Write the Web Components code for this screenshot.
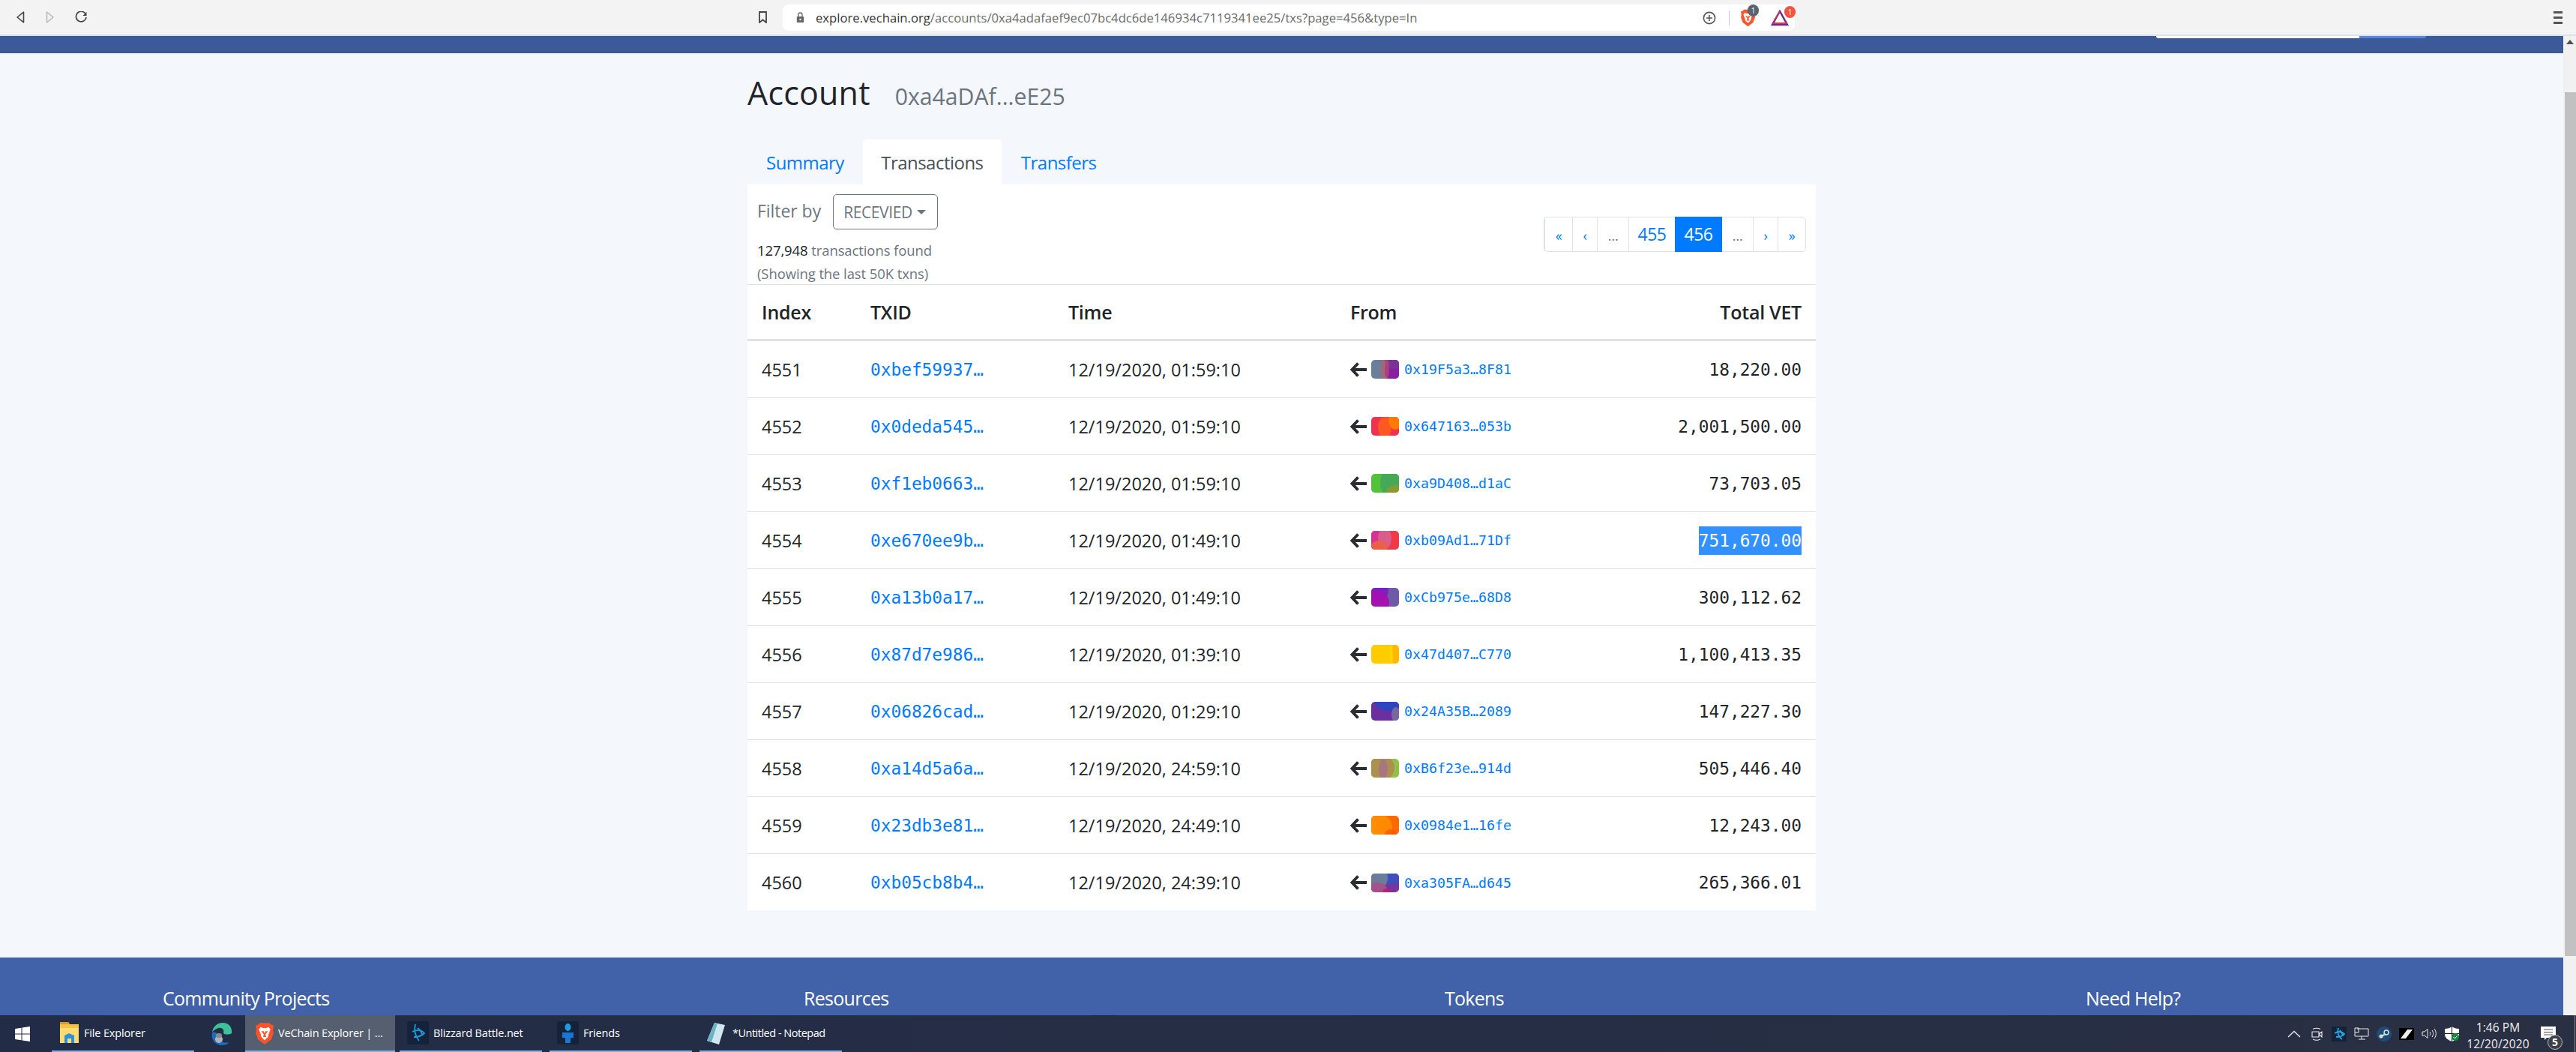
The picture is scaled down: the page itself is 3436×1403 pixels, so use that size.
<!DOCTYPE html>
<html lang="en"><head><meta charset="utf-8"><title>VeChain Explorer</title>
<style>
html,body{margin:0;padding:0;height:100%;overflow:hidden}
body{width:3436px;height:1403px;display:flex;flex-direction:column;font-family:"Open Sans","Noto Sans",sans-serif;background:#f4f7fc}
</style></head><body>
<browser-toolbar></browser-toolbar>
<page-view>
  <site-header></site-header>
  <account-title></account-title>
  <tab-bar></tab-bar>
  <tx-card>
    <tx-row index="4551" txid="0xbef59937…" time="12/19/2020, 01:59:10" addr="0x19F5a3…8F81" total="18,220.00" pic='#6a7f9b|#8a1aa0,31,14,13,18,.95|#7a3598,30,0,12,12,.9|#c85a60,18,12,6,17,.55'></tx-row>
    <tx-row index="4552" txid="0x0deda545…" time="12/19/2020, 01:59:10" addr="0x647163…053b" total="2,001,500.00" pic='#f2304f|#ff5a1f,18,14,9,14,.95|#ff7a00,32,3,9,14,1'></tx-row>
    <tx-row index="4553" txid="0xf1eb0663…" time="12/19/2020, 01:59:10" addr="0xa9D408…d1aC" total="73,703.05" pic='#52c23b|#45a85a,27,12,15,20,.95|#8c9a30,32,25,12,10,.95'></tx-row>
    <tx-row index="4554" txid="0xe670ee9b…" time="12/19/2020, 01:49:10" addr="0xb09Ad1…71Df" total="751,670.00" selected pic='#ee3a48|#d8309a,4,8,18,20,.95|#d9608a,18,10,9,14,.95|#ee6040,10,23,11,10,.95'></tx-row>
    <tx-row index="4555" txid="0xa13b0a17…" time="12/19/2020, 01:49:10" addr="0xCb975e…68D8" total="300,112.62" pic='#6f5ba5|#7b1fc0,6,4,17,14,.95|#a70fb0,8,20,16,16,.95'></tx-row>
    <tx-row index="4556" txid="0x87d7e986…" time="12/19/2020, 01:39:10" addr="0x47d407…C770" total="1,100,413.35" pic='#ffcc00|#ffb000,33,12,6,14,.7|#ffe000,27,12,2,11,.7'></tx-row>
    <tx-row index="4557" txid="0x06826cad…" time="12/19/2020, 01:29:10" addr="0x24A35B…2089" total="147,227.30" pic='#6b2fa0|#2f45c0,22,0,17,12,1|#7a6aa0,33,17,6,10,.95'></tx-row>
    <tx-row index="4558" txid="0xa14d5a6a…" time="12/19/2020, 24:59:10" addr="0xB6f23e…914d" total="505,446.40" pic='#8fc14a|#ad8f50,14,12,17,17,1|#a4708a,16,14,6,13,.8'></tx-row>
    <tx-row index="4559" txid="0x23db3e81…" time="12/19/2020, 24:49:10" addr="0x0984e1…16fe" total="12,243.00" pic='#ff6a00|#ffb000,-2,20,10,20,1|#ff8c00,12,16,16,18,.95|#ff5500,26,26,8,8,.8'></tx-row>
    <tx-row index="4560" txid="0xb05cb8b4…" time="12/19/2020, 24:39:10" addr="0xa305FA…d645" total="265,366.01" last pic='#7a349e|#3f4fbc,26,0,20,14,1|#6b7f9a,6,6,16,16,.95|#a8508a,8,24,14,12,.95|#c01870,20,26,5,6,.9'></tx-row>
  </tx-card>
  <site-footer></site-footer>
</page-view>
<task-bar></task-bar>
<script>
const SANS='"Open Sans","Noto Sans",sans-serif';
const MONO='"DejaVu Sans Mono","Liberation Mono",monospace';
function el(name,css,html){
  customElements.define(name,class extends HTMLElement{
    connectedCallback(){ if(this.shadowRoot) return;
      this.attachShadow({mode:'open'}).innerHTML='<style>'+css+'</style>'+(typeof html==='function'?html(this):html);
    }
  });
}
const LION=(w,h)=>`<svg width="${w}" height="${h}" viewBox="0 0 22 27"><path d="M5 1h12l2 2 3 1-1 6 1 3-3 8-8 6-8-6-3-8 1-3-1-6 3-1z" fill="#fb542b"/><path d="M6 6l3 1h4l3-1 2 3-2 5-1 4-3 3-1 1-1-1-3-3-1-4-2-5z" fill="#fff"/><path d="M7 11h3l1 3 1-3h3l-3 4 1 3h-4l1-3z" fill="#fb542b"/></svg>`;

el('browser-toolbar',`
:host{display:flex;flex:none;height:46px;background:#f3f3f3;border-bottom:2px solid #dee1e6;align-items:center;position:relative;box-sizing:content-box;font-family:${SANS}}
svg{display:block;flex:none}
.nav{display:flex;align-items:center;padding-left:21px;width:1011px;box-sizing:border-box}
.nav svg+svg{margin-left:26px}
.bm{margin-right:20px}
.url{margin-top:1px;width:1350px;height:35px;background:#fff;border-radius:8px;display:flex;align-items:center;padding-left:18px;box-sizing:border-box;position:relative;flex:none}
.url .t{font-size:16.6px;color:#6a6a6a;white-space:nowrap;margin-left:15px;letter-spacing:.03px}
.url b{font-weight:400;color:#333}
.r{position:absolute;left:0;top:0;height:35px;display:flex;align-items:center}
.plus{margin-left:1227px}
.sep{width:1px;height:20px;background:#c8c8c8;margin-left:17px}
.lion{margin-left:15px;position:relative}
.badge{position:absolute;width:15px;height:21px;border-radius:8px;font-size:10px;line-height:21px;text-align:center;color:#fff;top:3px}
.tri{margin-left:21px}
.menu{position:absolute;left:3406px;top:15px;display:flex;flex-direction:column;gap:4px}
.menu i{display:block;width:12px;height:3px;background:#555}
`,`<div class="nav">
<svg width="13" height="16" viewBox="0 0 13 16"><path d="M10.5 1.2v13.6L2 8z" fill="none" stroke="#444" stroke-width="1.6" stroke-linejoin="round"/></svg>
<svg width="13" height="16" viewBox="0 0 13 16"><path d="M2.5 1.2v13.6L11 8z" fill="none" stroke="#bbb" stroke-width="1.6" stroke-linejoin="round"/></svg>
<svg width="17" height="16" viewBox="0 0 17 16" style="margin-left:27px"><path d="M14 3.4A6.8 6.8 0 1 0 15 8" fill="none" stroke="#444" stroke-width="1.7"/><path d="M15.5 1v5h-5z" fill="#444"/></svg>
</div>
<svg class="bm" width="13" height="16" viewBox="0 0 13 16"><path d="M2 1h9v14l-4.500-3.500L2 15z" fill="none" stroke="#444" stroke-width="1.800"/></svg>
<div class="url">
<svg width="11" height="15" viewBox="0 0 11 15"><path d="M3 6V3.500a2.500 2.500 0 0 1 5 0V6" fill="none" stroke="#666" stroke-width="1.300"/><rect x=".8" y="6" width="9.400" height="8" rx="1" fill="#666"/><circle cx="5.500" cy="10" r="1.200" fill="#fff"/></svg>
<span class="t"><b>explore.vechain.org</b>/accounts/0xa4adafaef9ec07bc4dc6de146934c7119341ee25/txs?page=456&amp;type=In</span>
<div class="r">
<svg class="plus" width="18" height="18" viewBox="0 0 18 18"><circle cx="9" cy="9" r="7.600" fill="none" stroke="#555" stroke-width="1.600"/><path d="M9 5v8M5 9h8" stroke="#555" stroke-width="1.500"/></svg>
<i class="sep"></i>
<span class="lion">${LION(19,27)}<span class="badge" style="left:9px;top:-4px;background:#5c6370;height:16px;line-height:16px">1</span></span>
<svg class="tri" width="24" height="22" viewBox="0 0 24 22"><path d="M12 2L2 20h20z" fill="none" stroke="#6a2c91" stroke-width="2.500"/><path d="M12 2L5 14h-1z" fill="#e8323c" stroke="#e8323c"/><path d="M3 18h18" stroke="#e8323c" stroke-width="2"/></svg>
<span class="badge" style="left:1336px;top:2px;background:#f5533d;height:16px;line-height:16px">1</span>
</div></div>
<div class="menu"><i></i><i></i><i></i></div>`);

el('page-view',`
:host{display:block;flex:none;height:1306px;position:relative;overflow:hidden;background:#f4f7fc}
.main{width:3419px;height:1306px;overflow:hidden}
.bar{position:absolute;right:0;top:0;width:17px;height:1306px;background:#f1f1f1}
.bar i{position:absolute;left:2px;right:0;top:75px;height:1152px;background:#c1c1c1}
.bar svg{position:absolute;left:4px;top:5px}
`,`<div class="main"><slot></slot></div><div class="bar"><svg width="10" height="6"><path d="M5 0l5 6H0z" fill="#505050"/></svg><i></i></div>`);

el('site-header',`
:host{display:block;height:23px;background:#3c5a99;position:relative}
.s{position:absolute;left:2876px;top:0;width:271px;height:3px;background:#fff;border-bottom-left-radius:3px}
.b{position:absolute;left:3147px;top:0;width:89px;height:3px;background:#5b83e0;border-bottom-right-radius:3px}
`,`<i class="s"></i><i class="b"></i>`);

el('account-title',`
:host{display:flex;align-items:baseline;margin-left:997px;width:1425px;height:115px;box-sizing:border-box;padding-top:25px;color:#212529}
h2{margin:0;font:500 43px/56px ${SANS};letter-spacing:.2px}
small{font:400 30.2px/40px ${SANS};color:#6c757d;margin-left:33px;letter-spacing:0}
`,`<h2>Account</h2><small>0xa4aDAf...eE25</small>`);

el('tab-bar',`
:host{display:flex;margin-left:997px;height:60px;font:400 24px/62px ${SANS};letter-spacing:-.52px}
a{display:block;color:#007bff;padding:0 25px;text-decoration:none;box-sizing:border-box}
a.on{background:#fff;color:#495057;border-radius:5px 5px 0 0;padding:0;width:185px;text-align:center}
a:first-child{width:154px;padding:0 0 0 26px}
a:last-child{padding-left:26px}
`,`<a>Summary</a><a class="on">Transactions</a><a>Transfers</a>`);

el('tx-card',`
:host{display:block;margin-left:997px;width:1425px;height:968px;background:#fff;color:#212529}
.top{height:133px;display:flex;justify-content:space-between;align-items:center;padding:0 13px;box-sizing:border-box}
.left{align-self:flex-start;padding-top:13px}
.f{display:flex;align-items:center;height:47px;color:#6c757d;font-size:23px;letter-spacing:-.05px}
.f>span:first-child{position:relative;top:-2px}
.btn{margin-left:16px;width:140px;height:47px;box-sizing:border-box;border:1px solid #6c757d;border-radius:5px;display:flex;align-items:center;padding-left:13px;font-size:21px;letter-spacing:-.4px;color:#6c757d}
.btn i{margin-left:6px;border:6px solid transparent;border-top-color:#6c757d;border-bottom:0}
.c{font-size:18.500px;color:#6c757d;margin-top:12px;line-height:31px;letter-spacing:-.1px}
.c b{font-weight:400;color:#212529}
.head{display:grid;grid-template-columns:145px 264px 376px 1fr auto;height:76px;align-items:center;padding:0 19px;box-sizing:border-box;border-top:1px solid #dee2e6;border-bottom:3px solid #dee2e6;font:600 25px ${SANS};letter-spacing:-.25px}
.head :last-child{text-align:right}
`,`<div class="top"><div class="left"><div class="f"><span>Filter by</span><span class="btn">RECEVIED<i></i></span></div>
<div class="c"><b>127,948</b> transactions found<br>(Showing the last 50K txns)</div></div><page-nav></page-nav></div>
<div class="head"><span>Index</span><span>TXID</span><span>Time</span><span>From</span><span>Total VET</span></div><slot></slot>`);

el('page-nav',`
:host{display:flex;height:47px;border:1px solid #dee2e6;border-radius:5px;box-sizing:border-box;font:400 23px/45px ${SANS};color:#007bff;background:#fff}
span{display:block;text-align:center;border-left:1px solid #dee2e6;box-sizing:border-box;letter-spacing:-.5px}
span:first-child{border-left:0}
.sm{font-size:18px;line-height:48px}
.on{background:#007bff;color:#fff;border-left:0;margin:-1px 0;height:47px;line-height:47px}
.d{color:#6c757d}
`,`<span class="sm" style="width:37px">«</span><span class="sm" style="width:33px">‹</span><span class="sm d" style="width:42px">…</span><span style="width:62px">455</span><span class="on" style="width:63px">456</span><span class="sm d" style="width:41px;border-left:0">…</span><span class="sm" style="width:33px">›</span><span class="sm" style="width:37px">»</span>`);

el('tx-row',`
:host{display:grid;grid-template-columns:145px 264px 376px 1fr auto;height:76px;align-items:center;padding:0 19px;box-sizing:border-box;border-bottom:1px solid #dee2e6;font:400 23.500px ${SANS};letter-spacing:0;color:#212529}
:host([last]){border-bottom:0}
a{color:#007bff;text-decoration:none;font:400 22.800px ${MONO};letter-spacing:0}
.from{display:flex;align-items:center}
.from svg{display:block;flex:none}
.pic{margin-left:6px;border-radius:5px}
.addr{margin-left:7px;font-size:18.270px}
.total{font:400 22.800px ${MONO};letter-spacing:0}
.sel{display:inline-block;background:#3390ff;color:#fff;line-height:38px}
`,h=>{
  const p=h.getAttribute('pic').split('|');
  const shapes=p.slice(1).map(s=>{const a=s.split(',');return `<ellipse cx="${a[1]}" cy="${a[2]}" rx="${a[3]}" ry="${a[4]}" fill="${a[0]}" opacity="${a[5]}"/>`}).join('');
  const total=h.getAttribute('total');
  return `<span>${h.getAttribute('index')}</span><a>${h.getAttribute('txid')}</a><span>${h.getAttribute('time')}</span>
<div class="from"><svg width="22" height="22" viewBox="0 0 22 22"><path d="M10.500 2.500L2.500 11l8 8.500M3 11h19" fill="none" stroke="#2b2d33" stroke-width="4"/></svg>
<svg class="pic" width="37" height="25" viewBox="0 0 37 25"><rect width="37" height="25" fill="${p[0]}"/>${shapes}</svg><a class="addr">${h.getAttribute('addr')}</a></div>
<span class="total">${h.hasAttribute('selected')?`<span class="sel">${total}</span>`:total}</span>`;
});

el('site-footer',`
:host{display:grid;grid-template-columns:repeat(4,855px);margin-top:63px;height:77px;background:#4162a8;padding:37px 0 0 217px;box-sizing:border-box;color:#fff;font:400 25px/34px ${SANS};letter-spacing:-.72px}
`,`<span>Community Projects</span><span>Resources</span><span>Tokens</span><span>Need Help?</span>`);

el('task-bar',`
:host{display:flex;flex:none;height:49px;background:linear-gradient(90deg,#222c46,#252e44 60%,#2a3044);color:#fff;position:relative;font:400 14.500px ${SANS};letter-spacing:-.15px;align-items:stretch}
svg{display:block;flex:none}
.win{width:69px;display:flex;align-items:center;padding-left:20px;box-sizing:border-box}
.b{display:flex;align-items:center;box-sizing:border-box;border-bottom:2px solid #76b9ed;white-space:nowrap;width:190px;padding-left:10px;gap:6px}
.b.on{background:#565f70;width:200px;padding-left:14px;margin-right:6px}
.edge{width:68px;display:flex;align-items:center;padding-left:20px;box-sizing:border-box;height:49px}
.tray{position:absolute;left:3050px;top:0;height:49px;display:flex;align-items:center;gap:10px}
.tray span{width:20px;display:flex;justify-content:center}
.clock{position:absolute;left:3282px;width:100px;top:5px;text-align:center;line-height:22px;font-size:15.500px;letter-spacing:.1px;color:#eee}
.note{position:absolute;left:3389px;top:15px}
.n{position:absolute;left:3398px;top:26px;width:20px;height:20px;border-radius:50%;background:#3c3f48;border:1px solid #bbb;box-sizing:border-box;font-size:14px;font-weight:700;line-height:17px;text-align:center}
.end{position:absolute;right:1px;top:0;bottom:0;width:1px;background:#888}
`,`<div class="win"><svg width="20" height="20" viewBox="0 0 20 20" fill="#fff"><path d="M0 3l8.500-1.300v7.800H0zM9.500 1.500L20 0v9.500H9.500zM0 10.500h8.500v7.800L0 17zM9.500 10.500H20V20L9.500 18.500z"/></svg></div>
<div class="b" style="margin-right:0"><svg width="27" height="31" viewBox="0 0 27 31"><path d="M1 1h11l2 3h12v24H1z" fill="#f5c242"/><path d="M1 1h11l2 3H1z" fill="#d99a26"/><rect x="1" y="9" width="25" height="20" fill="#fbdc73"/><path d="M7 29V19l6-3 7 3v10h-4v-6h-5v6z" fill="#2f8fd8"/></svg>File Explorer</div>
<div class="edge"><svg width="31" height="32" viewBox="0 0 31 32"><path d="M4 14C5 5 12 1 18 1c8 0 13 6 12 14-3 2-9 2-11 0 2-6-4-9-9-6-3 1-5 3-6 5z" fill="#3fbf9a"/><path d="M4 14c-2 9 4 17 13 17 4 0 7-1 10-4-7 2-13-1-14-7-1-4-5-8-9-6z" fill="#1c6dbf"/><circle cx="13" cy="23" r="5" fill="#b0b4ba"/><rect x="9" y="15" width="8" height="6" rx="3" fill="#888"/></svg></div>
<div class="b on">${LION(24,30)}VeChain Explorer | ...</div>
<div class="b" style="margin-right:10px"><svg width="29" height="31" viewBox="0 0 29 31"><rect width="29" height="31" rx="3" fill="#14233a"/><path d="M11 4c-2 8 0 16 5 22M7 14c6-3 12-3 16 2-3 3-8 5-14 5M14 9c3 2 5 5 6 9" fill="none" stroke="#1d9ce0" stroke-width="1.800"/></svg>Blizzard Battle.net</div>
<div class="b" style="margin-right:10px"><svg width="29" height="31" viewBox="0 0 29 31"><rect width="29" height="31" rx="3" fill="#14233a"/><ellipse cx="14.500" cy="8" rx="4" ry="5" fill="#1d9ce0"/><path d="M7 15h15v7h-4v7h-7v-7H7z" fill="#1976d2"/></svg>Friends</div>
<div class="b" style="padding-left:8px;letter-spacing:-.5px"><svg width="30" height="32" viewBox="0 0 30 32"><path d="M12 2l14 3-8 26-16-5z" fill="#cfe7ee"/><path d="M12 2l4 1-8 25-6-2z" fill="#6db3c5"/></svg>*Untitled - Notepad</div>
<div class="tray">
<span><svg width="18" height="10" viewBox="0 0 18 10"><path d="M1 9l8-7.500L17 9" fill="none" stroke="#eee" stroke-width="1.300"/></svg></span>
<span><svg width="15" height="18" viewBox="0 0 15 18"><path d="M1 6h9v7H1zM10 9l4-3v7z M2 2.500c3-1.500 7-1.500 10 0M2 16c3 1.500 7 1.500 10 0" fill="none" stroke="#eee" stroke-width="1.100"/></svg></span>
<span><svg width="20" height="20" viewBox="0 0 20 20"><rect width="20" height="20" fill="#13233a"/><path d="M9 2c-2 6 0 12 5 15M4 9c5-3 9-3 13 1-2 3-6 4-11 4M11 5c2 2 3 4 4 7" fill="none" stroke="#25a5e4" stroke-width="1.800"/></svg></span>
<span><svg width="20" height="17" viewBox="0 0 20 17"><path d="M4 2h15v10H1M10 12v4M6 16h9M1 1h5v6H1zM1 7v5" fill="none" stroke="#eee" stroke-width="1"/></svg></span>
<span><svg width="20" height="20" viewBox="0 0 20 20"><circle cx="10" cy="10" r="10" fill="#1d4d77"/><circle cx="13" cy="8" r="3" fill="none" stroke="#ddd" stroke-width="1.500"/><circle cx="6" cy="13" r="2.500" fill="#ddd"/><path d="M6 13l6-3" stroke="#ddd" stroke-width="2"/></svg></span>
<span><svg width="20" height="16" viewBox="0 0 20 16"><rect width="20" height="16" fill="#000"/><rect x="2" y="2" width="16" height="12" fill="#eee"/><path d="M2 14L11 2h-9zM18 2L9 14h9z" fill="#000"/></svg></span>
<span><svg width="21" height="15" viewBox="0 0 21 15"><path d="M1 5h3l4-3.500v12L4 10H1zM11 5c1 1.500 1 3.500 0 5M14 3c2 2.500 2 6.500 0 9M17 1c3 4 3 9 0 13" fill="none" stroke="#eee" stroke-width="1"/></svg></span>
<span style="position:relative"><svg width="19" height="20" viewBox="0 0 19 20"><path d="M9.500 0C7 2 4 3 0 3v7c0 5 4 8 9.500 10C15 18 19 15 19 10V3c-4 0-7-1-9.500-3z" fill="#fff"/><path d="M9.500 0v20M0 9.500h19" stroke="#111" stroke-width="1"/></svg><svg style="position:absolute;left:10px;top:9px" width="10" height="10" viewBox="0 0 10 10"><circle cx="5" cy="5" r="5" fill="#128a3c"/><path d="M2.500 5l2 2 3-3.500" fill="none" stroke="#fff" stroke-width="1"/></svg></span>
</div>
<div class="clock">1:46 PM<br>12/20/2020</div>
<svg class="note" width="20" height="18" viewBox="0 0 20 18"><path d="M0 0h20v15H8l-3 3v-3H0z" fill="#fff"/><path d="M4 4h12M4 7.500h12M4 11h12" stroke="#555" stroke-width="1"/></svg>
<div class="n">5</div><i class="end"></i>`);
</script>
</body></html>
